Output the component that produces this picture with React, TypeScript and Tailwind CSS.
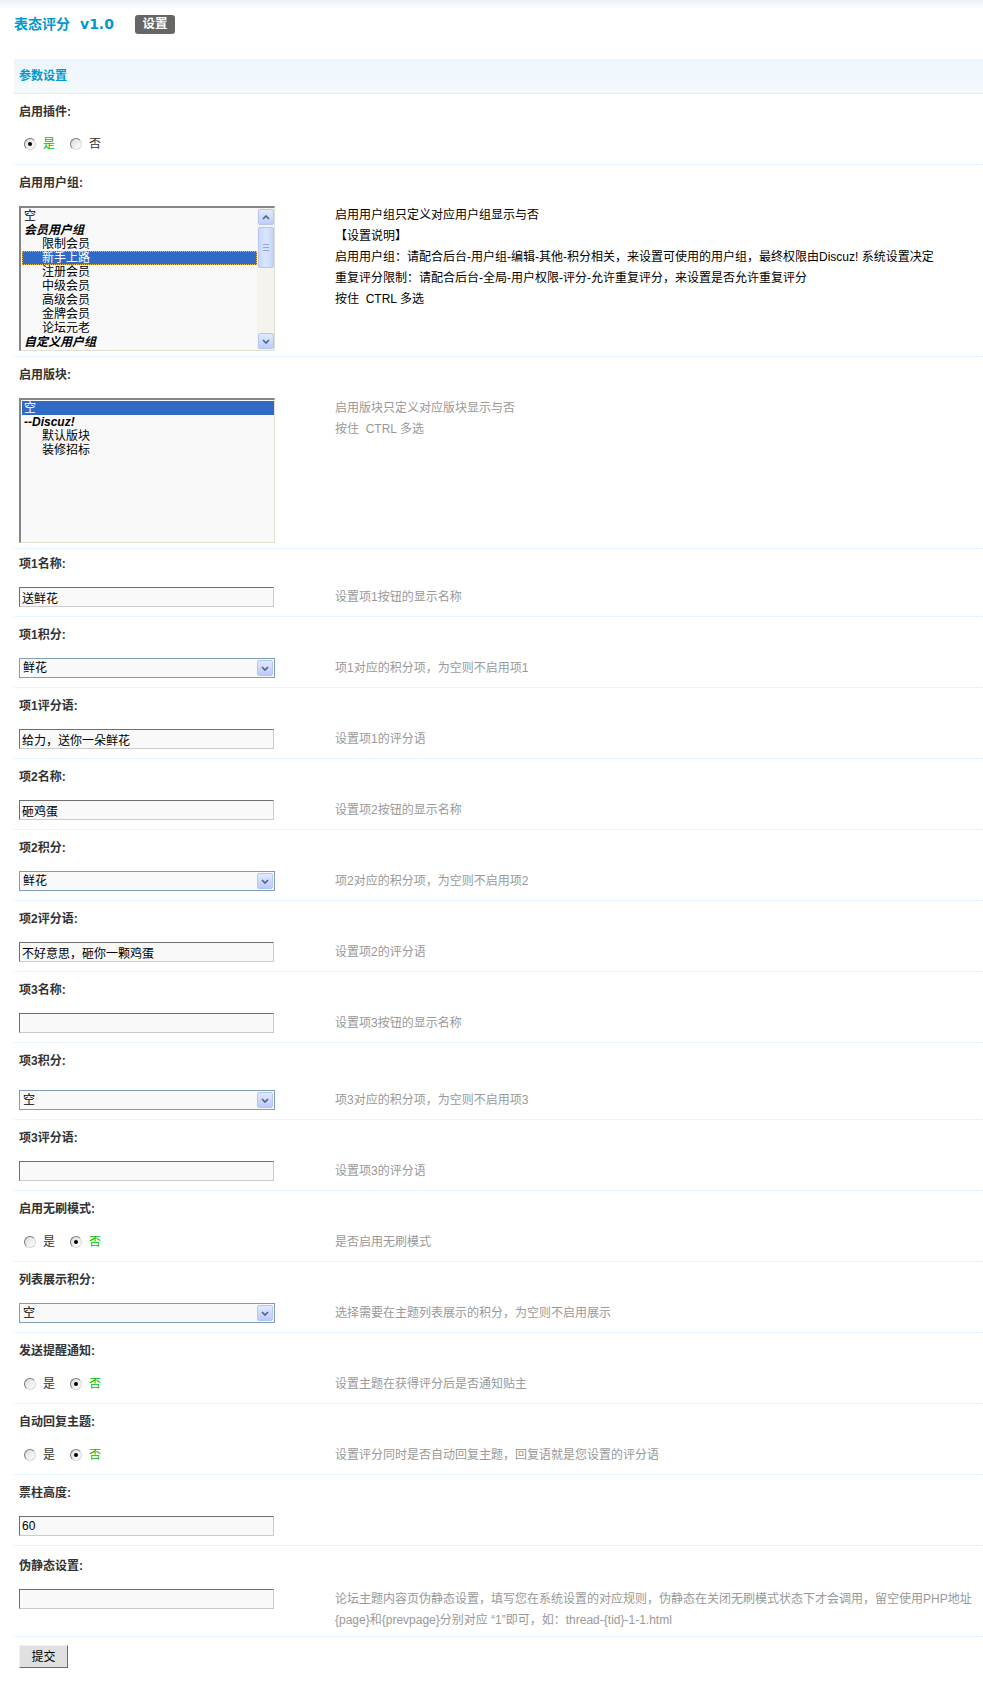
import React from "react";

// Discuz! admin style plugin settings page (表态评分)

type Opt = { text: string; group?: boolean; indent?: boolean; selected?: boolean; focus?: boolean };

const userGroups: Opt[] = [
  { text: "空" },
  { text: "会员用户组", group: true },
  { text: "限制会员", indent: true },
  { text: "新手上路", indent: true, selected: true, focus: true },
  { text: "注册会员", indent: true },
  { text: "中级会员", indent: true },
  { text: "高级会员", indent: true },
  { text: "金牌会员", indent: true },
  { text: "论坛元老", indent: true },
  { text: "自定义用户组", group: true },
];

const forums: Opt[] = [
  { text: "空", selected: true },
  { text: "--Discuz!", group: true },
  { text: "默认版块", indent: true },
  { text: "装修招标", indent: true },
];

const Chevron = ({ up }: { up?: boolean }) => (
  <svg width="8" height="5" viewBox="0 0 8 5" className="block">
    <path
      d={up ? "M1 4 L4 1 L7 4" : "M1 1 L4 4 L7 1"}
      fill="none"
      stroke="#4d6185"
      strokeWidth="1.6"
    />
  </svg>
);

const ScrollButton = ({ up }: { up?: boolean }) => (
  <div className="flex h-[16px] w-[16px] items-center justify-center rounded-[2px] border border-[#b4c6f2] bg-[linear-gradient(#e1e9fe,#bccdfa)]">
    <Chevron up={up} />
  </div>
);

function MultiSelect({ options, scroll }: { options: Opt[]; scroll?: boolean }) {
  return (
    <div className="flex h-[145px] w-[256px] border-t-2 border-l-2 border-r border-b border-t-[#858585] border-l-[#858585] border-r-[#e2e0d4] border-b-[#e2e0d4] bg-[#f9f9f9]">
      <div className="flex-1 pt-[1px] pl-[1px]">
        {options.map((o) => (
          <div
            key={o.text}
            className={[
              "h-[14px] leading-[14px] whitespace-nowrap",
              o.indent ? "pl-[20px]" : "pl-[2px]",
              o.group ? "font-bold italic" : "",
              o.selected ? "bg-[#316ac5] text-white" : "text-black",
              o.focus ? "outline outline-1 outline-dotted outline-[#e6b95c] -outline-offset-1" : "",
            ].join(" ")}
          >
            {o.text}
          </div>
        ))}
      </div>
      {scroll && (
        <div className="flex w-[17px] flex-col bg-[#f4f3ee] px-[0.5px] pt-[1px] pb-[1px]">
          <ScrollButton up />
          <div className="mt-[2px] flex h-[41px] w-[16px] flex-col items-center justify-center gap-[2px] rounded-[2px] border border-[#b4c6f2] bg-[linear-gradient(90deg,#c9d8fc,#dbe5fe,#c4d4fb)]">
            <span className="h-px w-[6px] bg-[#8fa6e0]" />
            <span className="h-px w-[6px] bg-[#8fa6e0]" />
            <span className="h-px w-[6px] bg-[#8fa6e0]" />
          </div>
          <div className="flex-1" />
          <ScrollButton />
        </div>
      )}
    </div>
  );
}

function TextBox({ value = "" }: { value?: string }) {
  return (
    <input
      type="text"
      readOnly
      defaultValue={value}
      className="block h-[20px] w-[255px] border border-t-[#6f6f6f] border-l-[#6f6f6f] border-r-[#cbcbcb] border-b-[#cbcbcb] bg-[#f9f9f9] px-[2px] text-[12px] leading-[18px] text-black outline-none"
    />
  );
}

function Dropdown({ value }: { value: string }) {
  return (
    <div className="flex h-[20px] w-[256px] items-center border border-[#7f9db9] bg-[#f9f9f9]">
      <span className="flex-1 pl-[3px] leading-[18px] text-black">{value}</span>
      <div className="mr-[1px] flex h-[16px] w-[16px] items-center justify-center rounded-[2px] border border-[#b4c6f2] bg-[linear-gradient(#e1e9fe,#b9cbf9)]">
        <Chevron />
      </div>
    </div>
  );
}

function Radio({ checked }: { checked?: boolean }) {
  return (
    <span className="inline-flex h-[12px] w-[12px] items-center justify-center rounded-full border border-t-[#7a7a7a] border-l-[#7a7a7a] border-r-[#d8d8d4] border-b-[#d8d8d4] bg-[linear-gradient(135deg,#dcdcd6,#ffffff)]">
      {checked && <span className="h-[4px] w-[4px] rounded-full bg-black" />}
    </span>
  );
}

function YesNo({ yes }: { yes: boolean }) {
  return (
    <div className="flex h-[20px] items-center pl-[5px]">
      <Radio checked={yes} />
      <span className={`ml-[7px] mr-[15px] ${yes ? "text-[#00c000]" : "text-[#333]"}`}>是</span>
      <Radio checked={!yes} />
      <span className={`ml-[7px] ${!yes ? "text-[#00c000]" : "text-[#333]"}`}>否</span>
    </div>
  );
}

function Row({
  label,
  control,
  desc,
  first,
  topPad = "pt-[8px]",
  gapPad = "pt-[13px]",
  botPad = "pb-[9px]",
  descTone = "text-[#999]",
}: {
  label: string;
  control: React.ReactNode;
  desc?: React.ReactNode;
  first?: boolean;
  topPad?: string;
  gapPad?: string;
  botPad?: string;
  descTone?: string;
}) {
  return (
    <div className={first ? "" : "border-t border-dotted border-[#d6e8f7]"}>
      <div className={`${topPad} pl-[5px] leading-[20px] font-bold text-[#333]`}>{label}</div>
      <div className={`flex ${gapPad} ${botPad} pl-[5px]`}>
        <div className="w-[316px] shrink-0">{control}</div>
        <div className={`leading-[20px] ${descTone}`}>{desc}</div>
      </div>
    </div>
  );
}

export default function App() {
  return (
    <div className="min-h-[1688px] bg-[linear-gradient(#e8f1f9,#ffffff_9px)] font-['Liberation_Sans','Noto_Sans_CJK_SC',sans-serif] text-[12px] text-[#333]">
      <div className="pl-[14px]">
        {/* title */}
        <div className="flex items-center pt-[15px]">
          <h3 className="font-['DejaVu_Sans','Noto_Sans_CJK_SC',sans-serif] text-[14px] leading-[19px] font-bold text-[#0099cc]">
            表态评分<span className="ml-[10px]">v1.0</span>
          </h3>
          <span className="ml-[21px] flex h-[19px] w-[40px] items-center justify-center rounded-[3px] bg-[#666] text-[12.5px] font-bold text-white">
            设置
          </span>
        </div>

        {/* section header */}
        <div className="mt-[25px] flex h-[35px] items-center border-b border-[#deeffb] bg-[linear-gradient(#edf5fc,#f4f9fd)] pl-[5px] font-bold text-[#0099cc]">
          参数设置
        </div>

        <Row first topPad="pt-[8px]" gapPad="pt-[12px]" botPad="pb-[10px]" label="启用插件:" control={<YesNo yes />} />

        <Row
          label="启用用户组:"
          botPad="pb-[5px]"
          descTone="text-black"
          control={<MultiSelect options={userGroups} scroll />}
          desc={
            <div className="-mt-[1px] leading-[21px]">
              <div>启用用户组只定义对应用户组显示与否</div>
              <div>【设置说明】</div>
              <div>启用用户组：请配合后台-用户组-编辑-其他-积分相关，来设置可使用的用户组，最终权限由Discuz! 系统设置决定</div>
              <div>重复评分限制：请配合后台-全局-用户权限-评分-允许重复评分，来设置是否允许重复评分</div>
              <div>按住&nbsp; CTRL 多选</div>
            </div>
          }
        />

        <Row
          label="启用版块:"
          botPad="pb-[5px]"
          control={<MultiSelect options={forums} />}
          desc={
            <div className="leading-[21px]">
              <div>启用版块只定义对应版块显示与否</div>
              <div>按住&nbsp; CTRL 多选</div>
            </div>
          }
        />

        <Row topPad="pt-[5px]" label="项1名称:" control={<TextBox value="送鲜花" />} desc="设置项1按钮的显示名称" />
        <Row label="项1积分:" control={<Dropdown value="鲜花" />} desc="项1对应的积分项，为空则不启用项1" />
        <Row label="项1评分语:" control={<TextBox value="给力，送你一朵鲜花" />} desc="设置项1的评分语" />
        <Row label="项2名称:" control={<TextBox value="砸鸡蛋" />} desc="设置项2按钮的显示名称" />
        <Row label="项2积分:" control={<Dropdown value="鲜花" />} desc="项2对应的积分项，为空则不启用项2" />
        <Row label="项2评分语:" control={<TextBox value="不好意思，砸你一颗鸡蛋" />} desc="设置项2的评分语" />
        <Row label="项3名称:" control={<TextBox />} desc="设置项3按钮的显示名称" />
        <Row gapPad="pt-[19px]" label="项3积分:" control={<Dropdown value="空" />} desc="项3对应的积分项，为空则不启用项3" />
        <Row label="项3评分语:" control={<TextBox />} desc="设置项3的评分语" />
        <Row label="启用无刷模式:" control={<YesNo yes={false} />} desc="是否启用无刷模式" />
        <Row label="列表展示积分:" control={<Dropdown value="空" />} desc="选择需要在主题列表展示的积分，为空则不启用展示" />
        <Row label="发送提醒通知:" control={<YesNo yes={false} />} desc="设置主题在获得评分后是否通知贴主" />
        <Row label="自动回复主题:" control={<YesNo yes={false} />} desc="设置评分同时是否自动回复主题，回复语就是您设置的评分语" />
        <Row label="票柱高度:" control={<TextBox value="60" />} />
        <Row
          topPad="pt-[10px]"
          botPad="pb-[5px]"
          label="伪静态设置:"
          control={<TextBox />}
          desc={
            <div className="leading-[21px]">
              <div>论坛主题内容页伪静态设置，填写您在系统设置的对应规则，伪静态在关闭无刷模式状态下才会调用，留空使用PHP地址</div>
              <div>{"{page}和{prevpage}分别对应 “1”即可，如：thread-{tid}-1-1.html"}</div>
            </div>
          }
        />

        <div className="border-t border-dotted border-[#d6e8f7] pt-[8px] pl-[5px]">
          <button
            type="button"
            className="h-[23px] w-[49px] border border-t-[#f2f2f2] border-l-[#f2f2f2] border-r-[#6a6a6a] border-b-[#6a6a6a] bg-[#e0e0e0] text-[12px] text-black"
          >
            提交
          </button>
        </div>
      </div>
    </div>
  );
}
